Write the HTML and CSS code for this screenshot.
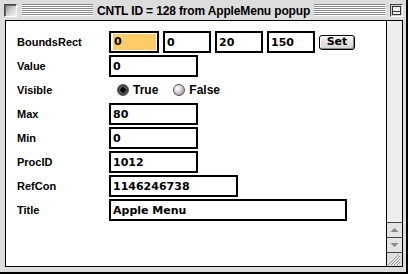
FILE: index.html
```html
<!DOCTYPE html>
<html lang="en">
<head>
    <meta charset="UTF-8">
    <title>CNTL ID = 128 from AppleMenu popup</title>
    <link rel="stylesheet" href="styles.css">
</head>
<body>
    <div class="window">
        <div class="titlebar">
            <span class="closebox"></span>
            <span class="stripes"></span>
            <span class="title">CNTL ID = 128 from AppleMenu popup</span>
            <span class="stripes"></span>
            <span class="zoombox"><span></span></span>
        </div>

        <div class="panel">
            <div class="content">
                <div class="row">
                    <div class="label">BoundsRect</div>
                    <div class="fields">
                        <div class="field first"><span class="sel">0</span></div>
                        <div class="field small">0</div>
                        <div class="field small">20</div>
                        <div class="field small">150</div>
                        <button class="btn">Set</button>
                    </div>
                </div>
                <div class="row">
                    <div class="label">Value</div>
                    <div class="field mid">0</div>
                </div>
                <div class="row">
                    <div class="label">Visible</div>
                    <div class="radios">
                        <span class="radio on"></span><span class="radio-text">True</span>
                        <span class="radio"></span><span class="radio-text">False</span>
                    </div>
                </div>
                <div class="row">
                    <div class="label">Max</div>
                    <div class="field mid">80</div>
                </div>
                <div class="row">
                    <div class="label">Min</div>
                    <div class="field mid">0</div>
                </div>
                <div class="row">
                    <div class="label">ProcID</div>
                    <div class="field mid">1012</div>
                </div>
                <div class="row">
                    <div class="label">RefCon</div>
                    <div class="field wide">1146246738</div>
                </div>
                <div class="row">
                    <div class="label">Title</div>
                    <div class="field widest">Apple Menu</div>
                </div>
            </div>

            <!-- scroll bar with both arrows at the bottom, inactive -->
            <div class="scrollbar">
                <div class="track"></div>
                <div class="arrow">
                    <svg width="15" height="14" viewBox="0 0 15 14"><polygon points="3.5,9 11.5,9 7.5,5" fill="#8a8a8a"/></svg>
                </div>
                <div class="arrow">
                    <svg width="15" height="14" viewBox="0 0 15 14"><polygon points="3.5,5 11.5,5 7.5,9" fill="#8a8a8a"/></svg>
                </div>
                <div class="grow">
                    <svg width="15" height="13" viewBox="0 0 15 13">
                        <path d="M3 12 L12 3" stroke="#fff" stroke-width="1"/>
                        <path d="M4 12 L13 3" stroke="#888" stroke-width="1"/>
                        <path d="M6 12 L13 5" stroke="#fff" stroke-width="1"/>
                        <path d="M7 12 L13 6" stroke="#888" stroke-width="1"/>
                        <path d="M9 12 L13 8" stroke="#fff" stroke-width="1"/>
                        <path d="M10 12 L13 9" stroke="#888" stroke-width="1"/>
                        <path d="M1 11 L10 2" stroke="#fff" stroke-width="1"/>
                        <path d="M1 12 L11 2" stroke="#888" stroke-width="1"/>
                    </svg>
                </div>
            </div>
        </div>
    </div>
</body>
</html>
```

FILE: styles.css
```css
* {
    margin: 0;
    padding: 0;
    box-sizing: border-box;
}

body {
    font-family: 'Liberation Sans', Arial, sans-serif;
    background: #fff;
}

/* Platinum window frame */
.window {
    width: 408px;
    height: 274px;
    background: #dddddd;
    border-right: 2px solid #000;
    border-bottom: 2px solid #000;
    display: flex;
    flex-direction: column;
}

.titlebar {
    height: 20px;
    display: flex;
    align-items: center;
    padding: 0 3px 0 4px;
}

.closebox {
    width: 13px;
    height: 13px;
    margin-right: 5px;
    border: 1px solid #444;
    border-right-color: #fff;
    border-bottom-color: #fff;
    background: linear-gradient(135deg, #8a8a8a, #d8d8d8 60%, #f4f4f4);
    box-shadow: inset 1px 1px 0 #666;
}

.stripes {
    flex: 1;
    height: 12px;
    background: repeating-linear-gradient(to bottom, #888 0 1px, #fff 1px 2px);
}

.title {
    margin: 0 4px;
    font-size: 12px;
    font-weight: bold;
    letter-spacing: -0.15px;
    line-height: 20px;
    padding-top: 2px;
    white-space: nowrap;
    color: #000;
}

.zoombox {
    width: 13px;
    height: 13px;
    margin-left: 5px;
    border: 1px solid #444;
    border-right-color: #fff;
    border-bottom-color: #fff;
    background: #cfcfcf;
    padding: 1px;
}

.zoombox span {
    display: block;
    height: 100%;
    border: 1px solid #333;
    background: linear-gradient(to bottom, #eee 0 4px, #333 4px 5px, #eee 5px);
}

/* Window body */
.panel {
    height: 247px;
    margin: 0 3px 0 5px;
    border: 1px solid #000;
    display: flex;
}

.content {
    flex: 1;
    background: #fff;
    border-right: 1px solid #000;
    padding: 9px 0 0 11px;
}

.row {
    height: 24px;
    display: flex;
    align-items: center;
}

.label {
    width: 92px;
    font-size: 11px;
    font-weight: bold;
    color: #000;
}

.fields {
    display: flex;
    align-items: center;
    gap: 4px;
}

.field {
    height: 22px;
    border: 2px solid #000;
    background: #fff;
    display: flex;
    align-items: center;
    padding: 0 2px;
    font-family: 'DejaVu Sans', sans-serif;
    font-size: 11px;
    font-weight: bold;
    color: #000;
}

.field.first {
    width: 50px;
    padding: 0 1px 0 2px;
}

.field.small {
    width: 48px;
}

.field.mid {
    width: 89px;
}

.field.wide {
    width: 129px;
}

.field.widest {
    width: 238px;
}

.sel {
    display: block;
    width: 100%;
    height: 16px;
    line-height: 16px;
    padding-left: 1px;
    background: #ffcc66;
}

.btn {
    width: 36px;
    height: 15px;
    margin-left: 0;
    border: 1px solid #000;
    border-radius: 3px;
    background: linear-gradient(to bottom, #f4f4f4, #d4d4d4);
    box-shadow: inset -1px -1px 0 #888, inset 1px 1px 0 #fff;
    font-family: 'DejaVu Sans', sans-serif;
    font-size: 11px;
    font-weight: bold;
    line-height: 12px;
    color: #000;
}

.radios {
    display: flex;
    align-items: center;
    padding-left: 8px;
}

.radio {
    width: 12px;
    height: 12px;
    border-radius: 50%;
    margin-right: 4px;
    border: 1px solid #555;
    background: radial-gradient(circle at 35% 35%, #fff 0, #e0e0e0 35%, #999 80%);
}

.radio.on {
    background: radial-gradient(circle, #000 0 2.5px, #666 3px, #333 5px);
}

.radio-text {
    font-size: 12px;
    font-weight: bold;
    margin-right: 15px;
}

/* Scroll bar */
.scrollbar {
    width: 15px;
    display: flex;
    flex-direction: column;
    background: #eeeeee;
}

.track {
    flex: 1;
}

.arrow {
    height: 15px;
    border-top: 1px solid #444;
    background: #e4e4e4;
    display: flex;
}

.grow {
    height: 14px;
    border-top: 1px solid #444;
    background: #dddddd;
    display: flex;
}
```
